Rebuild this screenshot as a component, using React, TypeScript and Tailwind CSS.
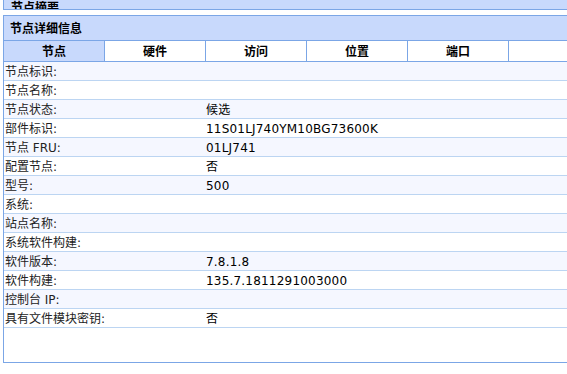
import React from "react";

const tabs = ["节点", "硬件", "访问", "位置", "端口"];

const rows: [string, string][] = [
  ["节点标识:", ""],
  ["节点名称:", ""],
  ["节点状态:", "候选"],
  ["部件标识:", "11S01LJ740YM10BG73600K"],
  ["节点 FRU:", "01LJ741"],
  ["配置节点:", "否"],
  ["型号:", "500"],
  ["系统:", ""],
  ["站点名称:", ""],
  ["系统软件构建:", ""],
  ["软件版本:", "7.8.1.8"],
  ["软件构建:", "135.7.1811291003000"],
  ["控制台 IP:", ""],
  ["具有文件模块密钥:", "否"],
];

const App: React.FC = () => {
  const [active, setActive] = React.useState(0);

  return (
    <div
      className="h-[374px] w-[567px] overflow-hidden bg-white pl-[3px] text-[12px] text-[#222]"
      style={{ fontFamily: '"DejaVu Sans", "Noto Sans CJK SC", sans-serif' }}
    >
      {/* 上面那块只露出一点 */}
      <div className="flex h-[10px] w-[640px] items-end overflow-hidden border-b border-l border-[#7ba6e6] bg-[#c8d9fc]">
        <div className="shrink-0 translate-y-[7px] pl-[7px] font-bold leading-[16px] text-black">
          节点摘要
        </div>
      </div>

      <div className="mt-[5px] w-[640px] border border-[#7ba6e6]">
        <div className="flex h-[25px] items-center border-b border-[#7ba6e6] bg-[#c8d9fc] pl-[6px] pt-px font-bold text-black">
          节点详细信息
        </div>

        <div className="flex h-[21px] border-b border-[#7ba6e6]">
          {tabs.map((t, i) => (
            <div
              key={t}
              onClick={() => setActive(i)}
              className={
                "flex w-[101px] shrink-0 cursor-pointer items-center justify-center border-r border-[#7ba6e6] pt-px font-bold text-black " +
                (active === i ? "bg-[#c8d9fc]" : "bg-white")
              }
            >
              {t}
            </div>
          ))}
        </div>

        <div>
          {rows.map(([label, value], i) => (
            <div
              key={label}
              className={
                "flex h-[19px] items-center border-b border-[#bcd5f2] pt-px " +
                (i % 2 === 0 ? "bg-[#f5f7ff]" : "bg-white")
              }
            >
              <div className="w-[202px] shrink-0 pl-px">{label}</div>
              <div className="tracking-[0.2px] text-black">{value}</div>
            </div>
          ))}
        </div>

        <div className="h-[34px]" />
      </div>
    </div>
  );
};

export default App;
